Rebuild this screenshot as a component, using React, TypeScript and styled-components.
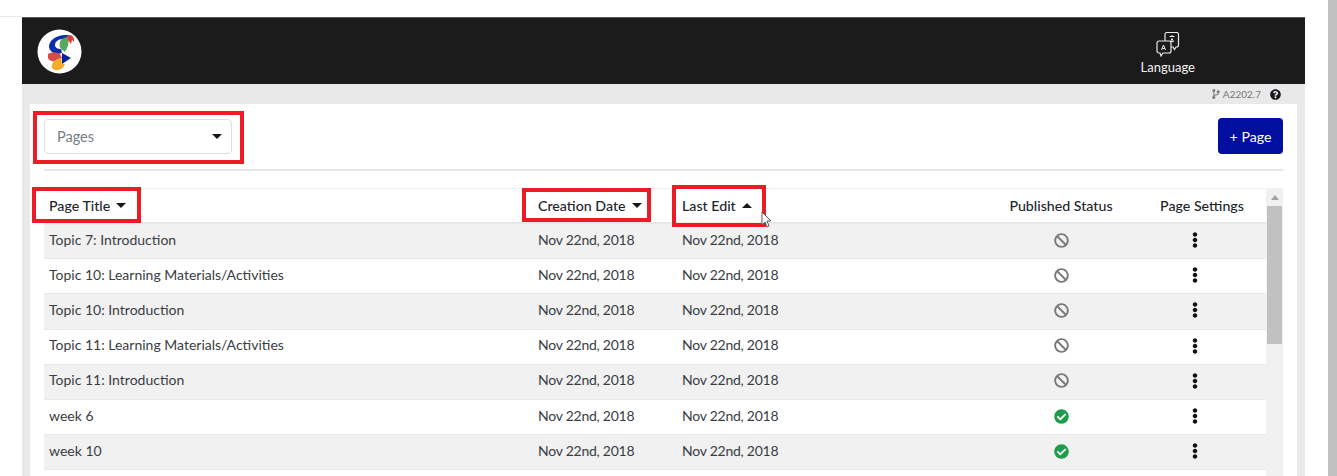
import styled, { createGlobalStyle } from 'styled-components';
import { FaBan, FaCheckCircle, FaCodeBranch, FaEllipsisV, FaQuestionCircle } from 'react-icons/fa';

const GlobalStyle = createGlobalStyle`
    html, body {
        margin: 0;
        padding: 0;
        background: #fff;
        font-family: Lato, "Noto Sans", sans-serif;
    }
`;

const Page = styled.div`
    position: relative;
    width: 1337px;
    height: 476px;
    overflow: hidden;
    background: #fff;
    padding: 17px 32px 0 22px;
    box-sizing: border-box;

    &::before {
        content: '';
        position: absolute;
        top: 16px;
        left: 0;
        width: 22px;
        height: 1px;
        background: #e8e8e8;
    }
`;

const PageScrollbar = styled.div`
    position: absolute;
    top: 0;
    right: 0;
    bottom: 0;
    width: 9px;
    background: #c1c1c1;
`;

const Shell = styled.div`
    height: 100%;
    display: flex;
    flex-direction: column;
    background: #e9e9ea;
`;

const Header = styled.header`
    height: 67px;
    flex: none;
    background: #1c1b1c;
    border-top: 1px solid #555;
    box-sizing: border-box;
    display: flex;
    align-items: center;
    justify-content: space-between;
    padding: 0 110px 0 15px;
`;

const LanguageButton = styled.div`
    display: flex;
    flex-direction: column;
    align-items: center;
    gap: 3px;
    color: #f2f2f2;
    font-size: 13px;
    line-height: 15px;
    margin-top: 4px;
`;

const VersionBar = styled.div`
    height: 20px;
    flex: none;
    display: flex;
    align-items: center;
    justify-content: flex-end;
    padding-right: 24px;
    color: #777;
    font-size: 10px;
    svg { flex: none; }
`;

const VersionText = styled.span`
    margin: 0 9px 0 2px;
`;

const Panel = styled.main`
    flex: 1;
    margin: 0 8px;
    background: #fff;
    padding: 0 14px;
    min-height: 0;
`;

const Toolbar = styled.div`
    height: 67px;
    box-sizing: border-box;
    display: flex;
    align-items: center;
    justify-content: space-between;
    border-bottom: 2px solid #e6e6e6;
    padding-bottom: 1px;
`;

const Annotated = styled.div`
    position: relative;
    display: flex;
    align-items: center;
`;

const RedBox = styled.span<{ $top: number; $left: number; $width: number; $height: number }>`
    position: absolute;
    top: ${(p) => p.$top}px;
    left: ${(p) => p.$left}px;
    width: ${(p) => p.$width}px;
    height: ${(p) => p.$height}px;
    box-sizing: border-box;
    border: 4px solid #ed1c24;
    pointer-events: none;
`;

const Select = styled.div`
    width: 188px;
    height: 35px;
    box-sizing: border-box;
    display: flex;
    align-items: center;
    justify-content: space-between;
    padding: 0 9px 0 12px;
    border: 1px solid #dfdfe2;
    border-radius: 4px;
    color: #777d85;
    font-size: 14.5px;
`;

const Caret = styled.span<{ $up?: boolean }>`
    display: inline-block;
    width: 0;
    height: 0;
    border-left: 5px solid transparent;
    border-right: 5px solid transparent;
    border-top: ${(p) => (p.$up ? '0' : '5px solid #16181d')};
    border-bottom: ${(p) => (p.$up ? '5px solid #16181d' : '0')};
`;

const AddButton = styled.button`
    width: 65px;
    height: 36px;
    padding: 0;
    border: none;
    border-radius: 4px;
    background: #000f9f;
    color: #fff;
    font-family: inherit;
    font-size: 14.2px;
`;

const TableArea = styled.div`
    display: flex;
    min-height: 295px;
    margin-top: 17px;
    border-top: 1px solid #f1f1f1;
`;

const Table = styled.div`
    flex: 1;
    min-width: 0;
`;

const columns = '489px 144px 317px 134px 134px';

const HeadRow = styled.div`
    height: 33px;
    display: grid;
    grid-template-columns: ${columns};
    color: #22252b;
    font-size: 14.2px;
    font-weight: 500;
    border-bottom: 2px solid #e8e8e8;
`;

const HeadCell = styled.div<{ $center?: boolean; $shift?: number }>`
    position: relative;
    display: flex;
    align-items: center;
    justify-content: ${(p) => (p.$center ? 'center' : 'flex-start')};
    gap: 6px;
    padding-left: ${(p) => (p.$center ? p.$shift ?? 0 : 5)}px;
    white-space: nowrap;
`;

const Row = styled.div<{ $shaded: boolean }>`
    height: 35.2px;
    box-sizing: border-box;
    display: grid;
    grid-template-columns: ${columns};
    align-items: center;
    color: #3a3d42;
    font-size: 14px;
    background: ${(p) => (p.$shaded ? '#f1f1f2' : '#fff')};
    border-bottom: 1px solid #e9e9e9;
`;

const Cell = styled.div<{ $center?: boolean; $date?: boolean }>`
    display: flex;
    align-items: center;
    justify-content: ${(p) => (p.$center ? 'center' : 'flex-start')};
    padding-left: ${(p) => (p.$center ? '0' : '5px')};
    padding-bottom: ${(p) => (p.$center ? '2px' : '4px')};
    letter-spacing: ${(p) => (p.$date ? '-0.25px' : 'normal')};
    white-space: nowrap;
`;

const Track = styled.div`
    width: 17px;
    flex: none;
    background: #f1f1f1;
    display: flex;
    flex-direction: column;
    align-items: center;
`;

const TrackArrow = styled.div`
    height: 17px;
    flex: none;
    display: flex;
    align-items: center;
    justify-content: center;
    span {
        border-left: 4px solid transparent;
        border-right: 4px solid transparent;
        border-bottom: 5px solid #a3a3a3;
    }
`;

const Thumb = styled.div`
    width: 15px;
    height: 138px;
    background: #c1c1c1;
`;

const Pointer = styled.svg`
    position: absolute;
    left: 760px;
    top: 211px;
`;

const rows = [
    { title: 'Topic 7: Introduction', published: false },
    { title: 'Topic 10: Learning Materials/Activities', published: false },
    { title: 'Topic 10: Introduction', published: false },
    { title: 'Topic 11: Learning Materials/Activities', published: false },
    { title: 'Topic 11: Introduction', published: false },
    { title: 'week 6', published: true },
    { title: 'week 10', published: true },
];

const Logo = () => (
    <svg width="45" height="45" viewBox="0 0 45 45">
        <circle cx="22.5" cy="22.5" r="22" fill="#fff" />
        <path d="M35 7c-6-2-15-1-20 4-4 4-4 9 0 12 3 2 7 2 10 1l-1-4c-3 0-6-1-6-4 0-3 3-6 8-6z" fill="#0b2fa8" />
        <path d="M24 11c2-2 5-3 8-3l-1 9-3 6-4-3c-2-3-2-6 0-9z" fill="#59a85c" />
        <path d="M30 7c2-1 5-1 6 1 1 1 1 3 1 5l-2-2-1 4-3-4z" fill="#e23b3b" />
        <path d="M11 25c3-2 8-2 12 0l2 4-4 3c-5 1-9 0-10-3z" fill="#d94b4b" />
        <path d="M25 24l9 5-9 6z" fill="#0a1f9a" />
        <path d="M15 36c1-4 5-7 9-7l1 6 3 0c-1 3-4 6-7 6-4 1-7-2-6-5z" fill="#f3ac2a" />
    </svg>
);

const LanguageIcon = () => (
    <svg width="24" height="25" viewBox="0 0 24 25" fill="none" stroke="#e8e8e8" strokeWidth="1.2">
        <path d="M9 2.5a2 2 0 0 1 2-2h9.5a2 2 0 0 1 2 2V13a2 2 0 0 1-2 2H20l-1.5 2.5L17 15H9z" fill="#1c1b1c" />
        <path d="M3 9h10a2 2 0 0 1 2 2v8a2 2 0 0 1-2 2H7l-2 3-1-3H3a2 2 0 0 1-2-2v-8a2 2 0 0 1 2-2z" fill="#1c1b1c" />
        <path d="M13.5 4.5h5M16 3v2M14.5 9.5l1.5-3 1.5 3z" strokeWidth="1" />
        <path d="M5.5 18l2-5 2 5M6.3 16.5h2.600" strokeWidth="1" />
    </svg>
);

const App = () => {
    return (
        <>
            <GlobalStyle />
            <Page>
                <Shell>
                    <Header>
                        <Logo />
                        <LanguageButton>
                            <LanguageIcon />
                            Language
                        </LanguageButton>
                    </Header>
                    <VersionBar>
                        <FaCodeBranch size={10} />
                        <VersionText>A2202.7</VersionText>
                        <FaQuestionCircle size={11} color="#16181d" />
                    </VersionBar>
                    <Panel>
                        <Toolbar>
                            <Annotated>
                                <Select>
                                    Pages
                                    <Caret />
                                </Select>
                                <RedBox $top={-8} $left={-11} $width={211} $height={53} />
                            </Annotated>
                            <AddButton>+ Page</AddButton>
                        </Toolbar>
                        <TableArea>
                            <Table>
                                <HeadRow>
                                    <HeadCell>
                                        Page Title <Caret />
                                        <RedBox $top={-2} $left={-12} $width={109} $height={36} />
                                    </HeadCell>
                                    <HeadCell>
                                        Creation Date <Caret />
                                        <RedBox $top={-1} $left={-11} $width={129} $height={34} />
                                    </HeadCell>
                                    <HeadCell>
                                        Last Edit <Caret $up />
                                        <RedBox $top={-4} $left={-5} $width={94} $height={42} />
                                    </HeadCell>
                                    <HeadCell $center>Published Status</HeadCell>
                                    <HeadCell $center $shift={14}>Page Settings</HeadCell>
                                </HeadRow>
                                {rows.map((row, i) => (
                                    <Row key={row.title} $shaded={i % 2 === 0}>
                                        <Cell>{row.title}</Cell>
                                        <Cell $date>Nov 22nd, 2018</Cell>
                                        <Cell $date>Nov 22nd, 2018</Cell>
                                        <Cell $center>
                                            {row.published ? (
                                                <FaCheckCircle size={15} color="#1e9c4b" />
                                            ) : (
                                                <FaBan size={15} color="#77797c" />
                                            )}
                                        </Cell>
                                        <Cell $center>
                                            <FaEllipsisV size={16} color="#111" />
                                        </Cell>
                                    </Row>
                                ))}
                            </Table>
                            <Track>
                                <TrackArrow>
                                    <span />
                                </TrackArrow>
                                <Thumb />
                            </Track>
                        </TableArea>
                    </Panel>
                </Shell>
                <PageScrollbar />
                <Pointer width="14" height="20" viewBox="0 0 14 20">
                    <path d="M2 1v13l3-3 2 5 2-1-2-5h4z" fill="#fff" stroke="#555" strokeWidth="1" />
                </Pointer>
            </Page>
        </>
    );
};

export default App;
